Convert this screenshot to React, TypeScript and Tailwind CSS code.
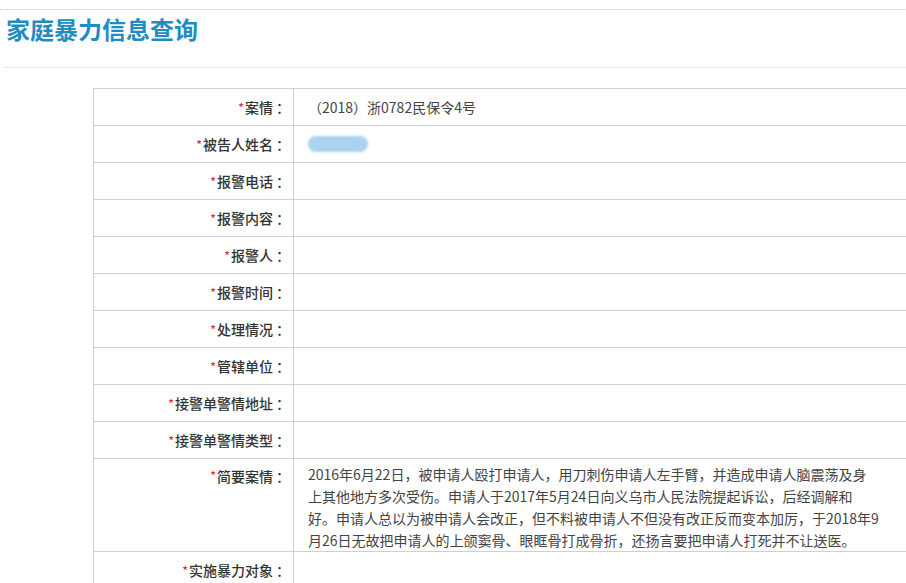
export default function App() {
  const rows: [string, React.ReactNode, string?][] = [
    ["案情", "（2018）浙0782民保令4号"],
    ["被告人姓名", <span className="inline-block w-[60px] h-[16px] rounded-full bg-[#a9d3f0] blur-[1px] align-middle" />],
    ["报警电话", ""],
    ["报警内容", ""],
    ["报警人", ""],
    ["报警时间", ""],
    ["处理情况", ""],
    ["管辖单位", ""],
    ["接警单警情地址", ""],
    ["接警单警情类型", ""],
    ["简要案情", (
      <div className="whitespace-nowrap leading-[22px] py-[4px]">
        2016年6月22日，被申请人殴打申请人，用刀刺伤申请人左手臂，并造成申请人脑震荡及身<br />
        上其他地方多次受伤。申请人于2017年5月24日向义乌市人民法院提起诉讼，后经调解和<br />
        好。申请人总以为被申请人会改正，但不料被申请人不但没有改正反而变本加厉，于2018年9<br />
        月26日无故把申请人的上颌窦骨、眼眶骨打成骨折，还扬言要把申请人打死并不让送医。
      </div>
    ), "tall"],
    ["实施暴力对象", ""],
  ];
  return (
    <div className="w-[906px] h-[583px] overflow-hidden bg-white text-[#333]" style={{ fontFamily: '"Noto Sans CJK SC", "Noto Sans", sans-serif' }}>
      <div className="border-t border-dotted border-[#ccc] mt-[9px]" />
      <div className="pl-[6px] pt-[1px] h-[42px] text-[24px] font-bold text-[#1f8dbf] leading-[36px]">家庭暴力信息查询</div>
      <div className="border-t border-[#e5e5e5] ml-[4px] mt-[15px]" />
      <div className="mt-[20px] ml-[93px] w-[830px] border-l border-t border-[#d0d0d0]">
        {rows.map(([l, v, t], i) => (
          <div key={i} className={`flex border-b border-[#d0d0d0] ${t ? "h-[93px]" : "h-[37px]"}`}>
            <div className={`w-[200px] shrink-0 border-r border-[#d0d0d0] flex justify-end pr-[3px] text-[14px] font-medium ${t ? "items-start pt-[7px]" : "items-center"}`}>
              <span className="text-[#d9363e] text-[12px] mr-[1px]">*</span>{l}<span className="ml-[3px]">：</span>
            </div>
            <div className={`flex-1 pl-[14px] text-[14px] text-[#444] ${t ? "" : "flex items-center"}`}>{v}</div>
          </div>
        ))}
      </div>
    </div>
  );
}
